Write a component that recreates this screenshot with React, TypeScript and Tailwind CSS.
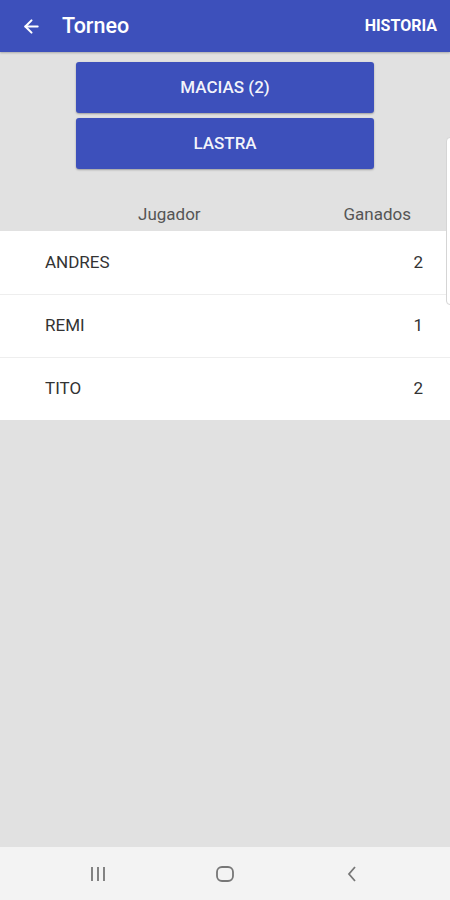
import { ArrowLeft } from "lucide-react"

type Row = {
  name: string
  won: number
}

const rows: Row[] = [
  { name: "ANDRES", won: 2 },
  { name: "REMI", won: 1 },
  { name: "TITO", won: 2 },
]

export default function App() {
  return (
    <div
      className="relative flex h-[900px] w-[450px] flex-col overflow-hidden bg-[#e1e1e1]"
      style={{ fontFamily: "Roboto, 'Liberation Sans', sans-serif" }}
    >
      {/* app bar */}
      <div className="flex h-[52px] shrink-0 items-center bg-[#3d50bb] pl-[21px] pr-[13px] text-white shadow-[0_1px_2px_rgba(0,0,0,0.25)]">
        <ArrowLeft className="h-[21px] w-[21px]" strokeWidth={2.4} />
        <span className="ml-[20px] text-[21.5px] font-medium leading-none">Torneo</span>
        <span className="ml-auto text-[16px] font-bold leading-none">HISTORIA</span>
      </div>

      {/* buttons */}
      <div className="flex flex-col items-center gap-[5px] pt-[10px]">
        <button className="flex h-[51px] w-[298px] items-center justify-center rounded-[3px] bg-[#3d50bb] text-[17px] font-medium text-white/95 shadow-[0_1px_2px_rgba(0,0,0,0.3)]">
          MACIAS (2)
        </button>
        <button className="flex h-[51px] w-[298px] items-center justify-center rounded-[3px] bg-[#3d50bb] text-[17px] font-medium text-white/95 shadow-[0_1px_2px_rgba(0,0,0,0.3)]">
          LASTRA
        </button>
      </div>

      {/* table header */}
      <div className="mt-[30px] flex h-[32px] items-center text-[17px] text-[#555]">
        <span className="ml-[138px]">Jugador</span>
        <span className="ml-auto mr-[39px]">Ganados</span>
      </div>

      {/* rows */}
      <div className="flex flex-col bg-white">
        {rows.map((row, i) => (
          <div
            key={row.name}
            className={`flex h-[63px] items-center pl-[45px] pr-[27px] text-[17px] text-[#333] ${i > 0 ? "border-t border-[#eeeeee]" : ""}`}
          >
            <span>{row.name}</span>
            <span className="ml-auto">{row.won}</span>
          </div>
        ))}
      </div>

      <div className="flex-1" />

      {/* system nav bar */}
      <div className="grid h-[53px] shrink-0 grid-cols-3 items-center justify-items-center bg-[#f3f3f3] px-[35px]">
        <svg width="20" height="16" viewBox="0 0 20 16" className="text-[#777]">
          <path d="M4 1v14M10 1v14M16 1v14" stroke="currentColor" strokeWidth="1.8" />
        </svg>
        <svg width="20" height="20" viewBox="0 0 20 20" className="text-[#777]">
          <rect x="2" y="3" width="16" height="14" rx="5" fill="none" stroke="currentColor" strokeWidth="1.8" />
        </svg>
        <svg width="14" height="18" viewBox="0 0 14 18" className="text-[#777]">
          <path d="M10 2L4 9l6 7" fill="none" stroke="currentColor" strokeWidth="1.8" />
        </svg>
      </div>

      {/* edge panel handle */}
      <div className="absolute right-[-6px] top-[137px] h-[168px] w-[10px] rounded-l-[4px] border border-[#d5d5d5] bg-white" />
    </div>
  )
}
